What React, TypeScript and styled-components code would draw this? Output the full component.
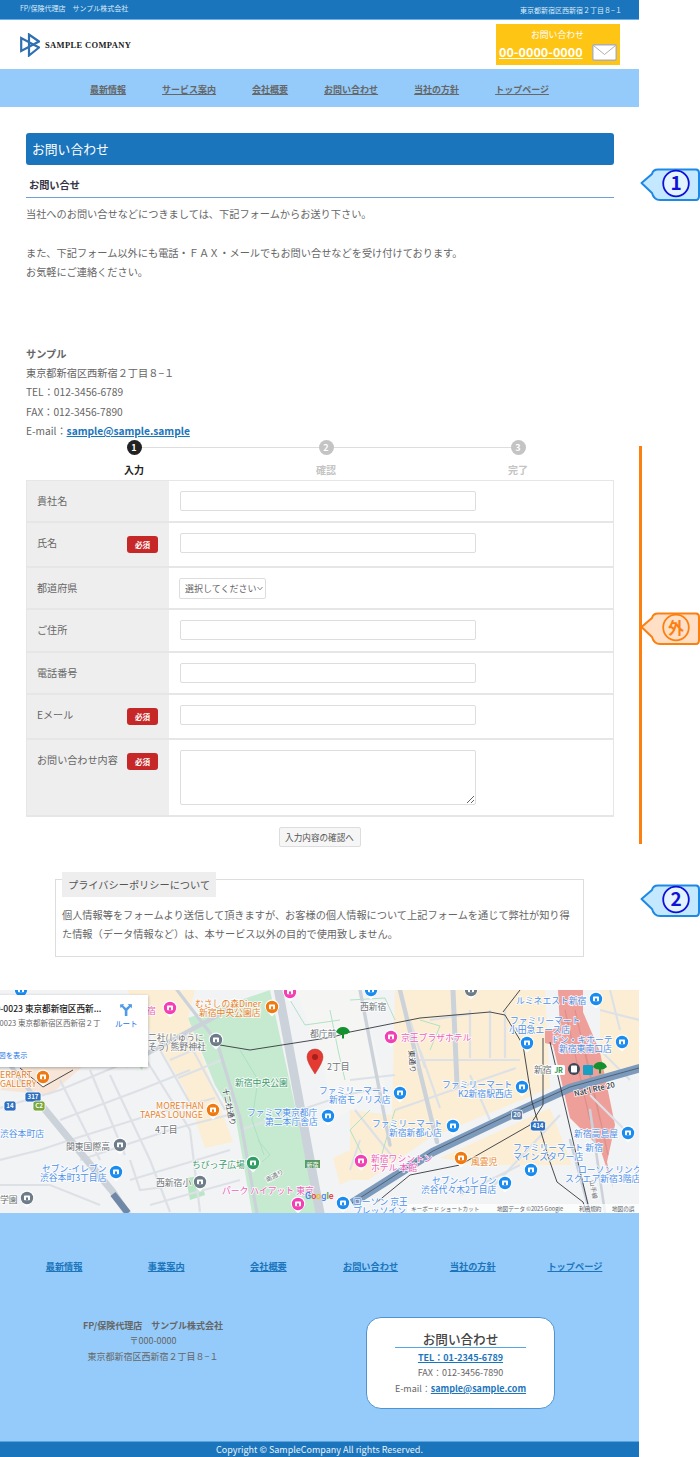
import React from 'react';
import styled, { createGlobalStyle } from 'styled-components';

const GlobalStyle = createGlobalStyle`
	html, body {
		margin: 0;
		padding: 0;
		background: #fff;
	}
	body {
		font-family: 'Noto Sans CJK JP', 'Noto Sans', sans-serif;
		color: #666;
		font-size: 10px;
	}
	* {
		box-sizing: border-box;
	}
`;

const BLUE = '#1b75bc';
const SKY = '#94cbfa';

const Shell = styled.div`
	position: relative;
	width: 700px;
	height: 1457px;
	overflow: hidden;
`;

const Page = styled.div`
	width: 639px;
`;

const TopBar = styled.div`
	height: 20px;
	background: ${BLUE};
	border-bottom: 1px solid #6db0e8;
	color: #dcecf9;
	font-size: 7px;
	display: flex;
	justify-content: space-between;
	padding: 0 17px 0 20px;
	line-height: 16px;
`;

const TopAddress = styled.span`
	padding-top: 2px;
`;

const Header = styled.header`
	height: 49px;
	display: flex;
	justify-content: space-between;
	align-items: center;
	padding: 0 19px 0 20px;
`;

const Brand = styled.div`
	display: flex;
	align-items: center;
	gap: 5px;
	font-family: 'Liberation Serif', serif;
	font-weight: 700;
	font-size: 8.5px;
	letter-spacing: 0.35px;
	color: #222;
`;

const CallBox = styled.div`
	width: 124px;
	height: 41px;
	background: #ffc515;
	color: #fff;
	padding: 4px 3px 0;
`;

const CallTitle = styled.div`
	font-size: 8.8px;
	line-height: 14px;
	padding-left: 32px;
`;

const CallRow = styled.div`
	display: flex;
	justify-content: space-between;
	align-items: center;
`;

const CallNumber = styled.a`
	font-size: 12.6px;
	line-height: 20px;
	font-weight: 700;
	text-decoration: underline;
`;

const Nav = styled.nav`
	height: 38px;
	background: ${SKY};
	display: flex;
	justify-content: center;
	align-items: center;
	gap: 36px;
	padding-top: 2px;
`;

const NavLink = styled.a`
	font-size: 9px;
	font-weight: 700;
	color: #666;
	text-decoration: underline;
`;

const Main = styled.main`
	padding: 26px 25px 33px 26px;
`;

const Title = styled.h1`
	margin: 0;
	height: 32px;
	background: ${BLUE};
	border-radius: 3px;
	color: #fff;
	font-size: 12.8px;
	font-weight: 400;
	line-height: 32px;
	padding-left: 6px;
`;

const SubTitle = styled.h2`
	margin: 0;
	height: 33px;
	padding: 13px 0 0 3px;
	font-size: 10.2px;
	line-height: 14px;
	font-weight: 700;
	color: #334;
	border-bottom: 1px solid #6f9fd4;
`;

const Text = styled.p<{ $gap?: number }>`
	margin: ${(p) => p.$gap ?? 0}px 0 0;
	font-size: 10.2px;
	line-height: 19.2px;
`;

const MailLink = styled.a`
	color: ${BLUE};
	font-weight: 700;
	text-decoration: underline;
`;

const Steps = styled.ol`
	list-style: none;
	margin: 0;
	padding: 0 0 2px 12px;
	height: 40px;
	display: grid;
	grid-template-columns: repeat(3, 192px);
`;

const Step = styled.li<{ $on?: boolean }>`
	position: relative;
	display: flex;
	flex-direction: column;
	align-items: center;
	gap: 8px;
	color: ${(p) => (p.$on ? '#222' : '#c4c4c4')};
	font-size: 10px;
	font-weight: 700;
	line-height: 14px;

	&:not(:first-child)::before {
		content: '';
		position: absolute;
		left: -50%;
		right: 50%;
		top: 7px;
		height: 1px;
		background: #ddd;
		z-index: 0;
	}
`;

const StepDot = styled.span<{ $on?: boolean }>`
	position: relative;
	z-index: 1;
	width: 15px;
	height: 15px;
	border-radius: 50%;
	background: ${(p) => (p.$on ? '#222' : '#c4c4c4')};
	color: #fff;
	font-size: 9px;
	line-height: 15px;
	text-align: center;
`;

const Form = styled.form`
	border: 1px solid #e6e6e6;
	border-bottom: 0;
`;

const Row = styled.div<{ $h: number }>`
	height: ${(p) => p.$h}px;
	display: grid;
	grid-template-columns: 142px 1fr;
	border-bottom: 2px solid #e6e6e6;
`;

const LabelCell = styled.div`
	background: #eee;
	padding: 13px 11px 0 10px;
	display: flex;
	justify-content: space-between;
	align-items: flex-start;
	line-height: 14px;
	font-size: 10.1px;
`;

const FieldCell = styled.div`
	padding: 10px 0 0 11px;
	display: flex;
	align-items: flex-start;
`;

const Badge = styled.span`
	width: 31px;
	height: 17px;
	background: #c62828;
	border-radius: 3px;
	color: #fff;
	font-size: 7.6px;
	font-weight: 700;
	line-height: 17px;
	text-align: center;
`;

const Input = styled.input`
	width: 296px;
	height: 20px;
	border: 1px solid #ddd;
	border-radius: 2px;
	background: #fff;
	outline: none;
`;

const SelectWrap = styled.div`
	position: relative;
	width: 87px;
	height: 21px;
	margin-left: -1px;

	svg {
		position: absolute;
		right: 3px;
		top: 8px;
	}
`;

const Select = styled.select`
	appearance: none;
	width: 100%;
	height: 100%;
	padding: 0 0 0 5px;
	border: 1px solid #ddd;
	border-radius: 2px;
	background: #fff;
	color: #666;
	font-family: inherit;
	font-size: 9px;
`;

const TextArea = styled.textarea`
	width: 296px;
	height: 55px;
	border: 1px solid #ddd;
	border-radius: 2px;
	outline: none;
`;

const Actions = styled.div`
	display: flex;
	justify-content: center;
	margin-top: 10px;
	padding-right: 1px;
`;

const Submit = styled.button`
	width: 82px;
	height: 20px;
	padding: 0;
	border: 1px solid #ddd;
	border-radius: 2px;
	background: #f6f6f6;
	color: #555;
	font-family: inherit;
	font-size: 8.6px;
`;

const Privacy = styled.section`
	width: 529px;
	height: 78px;
	margin: 32px 0 0 29px;
	padding: 0 6px;
	border: 1px solid #ddd;
`;

const PrivacyTitle = styled.h3`
	display: inline-block;
	margin: -8px 0 0;
	padding: 0 6px;
	height: 25px;
	background: #eee;
	color: #555;
	font-size: 10.2px;
	font-weight: 400;
	line-height: 26px;
	vertical-align: top;
`;

const PrivacyText = styled.p`
	margin: 8px 0 0;
	font-size: 10.2px;
	line-height: 19.2px;
`;

const MapFrame = styled.div`
	position: relative;
	height: 223px;
	overflow: hidden;
	background: #f2f3f5;
`;

const MapSvg = styled.svg`
	display: block;
	font-family: 'Noto Sans CJK JP', 'Noto Sans', sans-serif;
`;

const MapLabel = styled.text<{ $c: string; $s?: number }>`
	fill: ${(p) => p.$c};
	font-size: ${(p) => p.$s ?? 8.8}px;
	dominant-baseline: central;
	paint-order: stroke;
	stroke: rgba(255, 255, 255, 0.85);
	stroke-width: 1.6px;
`;

const PlaceCard = styled.div`
	position: absolute;
	left: -33px;
	top: 5px;
	width: 181px;
	height: 72px;
	background: #fff;
	box-shadow: 0 1px 3px rgba(0, 0, 0, 0.3);
	padding: 7px 0 0 10px;
	display: grid;
	grid-template-columns: 1fr 50px;
`;

const PlaceName = styled.div`
	font-size: 8.6px;
	line-height: 12px;
	font-weight: 500;
	color: #222;
	white-space: nowrap;
`;

const PlaceAddress = styled.div`
	font-size: 7.5px;
	line-height: 14px;
	margin-top: 2px;
	color: #666;
	white-space: nowrap;
`;

const PlaceLink = styled.a`
	display: block;
	margin-top: 19px;
	font-size: 7.2px;
	line-height: 12px;
	color: #1a73e8;
	white-space: nowrap;
`;

const RouteBox = styled.div`
	display: flex;
	flex-direction: column;
	align-items: center;
	gap: 1px;
	color: #1a73e8;
	font-size: 7.6px;
	line-height: 12px;
	padding: 1px 0 0 0;
`;

const Footer = styled.footer`
	height: 228px;
	background: ${SKY};
	padding: 46px 13px 0;
`;

const FooterNav = styled.div`
	display: grid;
	grid-template-columns: repeat(6, 1fr);
	height: 14px;
	line-height: 14px;
	text-align: center;
`;

const FooterLink = styled.a`
	font-size: 9.2px;
	font-weight: 700;
	color: ${BLUE};
	text-decoration: underline;
`;

const ContactLink = styled(FooterLink)`
	font-size: 9px;
`;

const FooterBody = styled.div`
	display: flex;
	margin-top: 44px;
	margin-left: -13px;
`;

const Company = styled.div`
	width: 306px;
	padding-top: 1px;
	text-align: center;
	font-size: 9px;
	line-height: 15.4px;
`;

const ContactCard = styled.div`
	width: 189px;
	height: 92px;
	margin-left: 60px;
	padding-top: 13px;
	background: #fff;
	border: 1px solid #4f94cf;
	border-radius: 15px;
	text-align: center;
	font-size: 9px;
	line-height: 15.4px;
`;

const ContactTitle = styled.div`
	width: 131px;
	height: 17px;
	margin: 0 auto 2px;
	border-bottom: 1px solid #55a6e6;
	font-size: 12.6px;
	font-weight: 500;
	line-height: 16px;
	color: #444;
`;

const Copyright = styled.div`
	height: 16px;
	background: ${BLUE};
	border-top: 1px solid #5aa4de;
	color: #e8f2fa;
	font-size: 9px;
	line-height: 16px;
	text-align: center;
`;

const Marker = styled.svg<{ $top: number }>`
	position: absolute;
	left: 639px;
	top: ${(p) => p.$top}px;
	display: block;
	font-family: 'Noto Sans CJK JP', 'Liberation Sans', sans-serif;
`;

const OuterRule = styled.div`
	position: absolute;
	left: 639px;
	top: 446px;
	width: 3px;
	height: 398px;
	background: #fb8010;
`;

const Callout: React.FC<{ top: number; label: string; tone: 'blue' | 'orange' }> = ({ top, label, tone }) => {
	const fill = tone === 'blue' ? '#c3e8ff' : '#ffdfc6';
	const line = tone === 'blue' ? '#1e88e5' : '#fb8010';
	const ring = tone === 'blue' ? '#1010d8' : '#fb8010';
	return (
		<Marker $top={top} width="61" height="34" viewBox="0 0 61 34">
			<path
				d="M2.5 15 L13 6 Q14 1.5 19 1.5 H57 Q60 1.5 60 5 V28 Q60 32 57 32 H21 Q15 32 13 25 Z"
				fill={fill}
				stroke={line}
				strokeWidth="2"
				strokeLinejoin="round"
			/>
			<circle cx="37" cy="15.5" r="12.8" fill={tone === 'blue' ? '#e3f4ff' : fill} stroke={ring} strokeWidth="1.8" />
			<text x="37" y="22" textAnchor="middle" fontSize={tone === 'blue' ? 19 : 16} fontWeight="700" fill={ring}>
				{label}
			</text>
		</Marker>
	);
};

const Logo = () => (
	<svg width="20" height="24" viewBox="0 0 20 24" fill="none" stroke="#2f6eb0" strokeWidth="2.2" strokeLinejoin="miter">
		<path d="M1.2 5 L1.2 18 L19 8.5 L9 1.5 V22.5 L19 14.5 L1.2 5 Z" />
	</svg>
);

const Envelope = () => (
	<svg width="25" height="17" viewBox="0 0 25 17">
		<rect x="0.8" y="0.8" width="23.4" height="15.4" rx="1.5" fill="#fff" stroke="#aeaeae" strokeWidth="1.4" />
		<path d="M1.5 1.5 L12.5 10.5 L23.5 1.5" fill="none" stroke="#aeaeae" strokeWidth="1" />
	</svg>
);

const Chevron = () => (
	<svg width="6" height="5" viewBox="0 0 6 5" fill="none" stroke="#666" strokeWidth="0.8">
		<path d="M0.5 1 L3 3.8 L5.5 1" />
	</svg>
);

const RouteIcon = () => (
	<svg width="14" height="14" viewBox="0 0 14 14">
		<path d="M1 1.5 L5 1 L4.2 2.4 L7 5 L10 2.4 L8.8 1 L13 1.2 L12.8 5.4 L11.6 4 L8.4 7.4 V13 H5.8 V7.6 L2.8 4 L1.4 5 Z" fill="#4f9be8" />
	</svg>
);

type Tint = 'blue' | 'pink' | 'orange' | 'grey' | 'green';

const tint: Record<Tint, string> = {
	blue: '#1a8cf0',
	pink: '#f43fb4',
	orange: '#f07a12',
	grey: '#6d7c88',
	green: '#2f9e62',
};

const labelTint: Record<Tint, string> = {
	blue: '#4d90ea',
	pink: '#ee5fbb',
	orange: '#e8832a',
	grey: '#6f7478',
	green: '#3d9a6c',
};

const labels: [string, number, number, Tint][] = [
	['むさしの森Diner', 195, 13, 'orange'],
	['新宿中央公園店', 199, 22, 'orange'],
	['宿', 147, 20, 'pink'],
	['二社(じゅうに', 148, 47, 'grey'],
	['そう) 熊野神社', 148, 56, 'grey'],
	['都庁前', 310, 43, 'grey'],
	['新宿中央公園', 235, 92, 'green'],
	['2丁目', 327, 76, 'grey'],
	['MORETHAN', 156, 115, 'orange'],
	['TAPAS LOUNGE', 140, 124, 'orange'],
	['ERPART', 0, 84, 'orange'],
	['GALLERY', 0, 93, 'orange'],
	['ファミマ東京都庁', 247, 122, 'blue'],
	['第二本庁舎店', 265, 131, 'blue'],
	['ファミリーマート', 319, 100, 'blue'],
	['新宿モノリス店', 329, 109, 'blue'],
	['4丁目', 155, 139, 'grey'],
	['関東国際高', 66, 156, 'grey'],
	['渋谷本町店', 0, 143, 'blue'],
	['セブン-イレブン', 42, 178, 'blue'],
	['渋谷本町3丁目店', 40, 187, 'blue'],
	['西新宿小', 156, 192, 'grey'],
	['ちびっ子広場', 192, 174, 'green'],
	['学園', 0, 209, 'grey'],
	['パーク ハイアット 東京', 222, 200, 'pink'],
	['西新宿', 360, 16, 'grey'],
	['京王プラザホテル', 401, 47, 'pink'],
	['ルミネエスト新宿', 516, 10, 'blue'],
	['ファミリーマート', 510, 30, 'blue'],
	['小田急エース店', 509, 39, 'blue'],
	['ドン・キホーテ', 551, 49, 'blue'],
	['新宿東南口店', 559, 58, 'blue'],
	['新宿', 534, 79, 'grey'],
	['ファミリーマート', 442, 94, 'blue'],
	['K2新宿駅西店', 458, 103, 'blue'],
	['ファミリーマート', 372, 133, 'blue'],
	['新宿新都心店', 389, 142, 'blue'],
	['新宿高島屋', 574, 143, 'blue'],
	['ファミリーマート 新宿', 513, 157, 'blue'],
	['マインズタワー店', 513, 166, 'blue'],
	['ローソン リンク', 578, 179, 'blue'],
	['スクエア新宿3階店', 565, 188, 'blue'],
	['新宿ワシントン', 371, 168, 'pink'],
	['ホテル 本館', 371, 177, 'pink'],
	['風雲児', 471, 171, 'orange'],
	['セブン-イレブン', 432, 190, 'blue'],
	['渋谷代々木2丁目店', 421, 199, 'blue'],
	['ローソン 京王', 353, 211, 'blue'],
	['プレッソイン', 353, 220, 'blue'],
];

const pins: [number, number, Tint][] = [
	[272, 17, 'orange'],
	[170, 18, 'pink'],
	[290, 2, 'pink'],
	[216, 50, 'grey'],
	[213, 120, 'orange'],
	[43, 87, 'orange'],
	[328, 126, 'blue'],
	[120, 155, 'grey'],
	[116, 182, 'blue'],
	[200, 192, 'grey'],
	[253, 173, 'green'],
	[27, 208, 'grey'],
	[298, 214, 'pink'],
	[343, 213, 'blue'],
	[391, 47, 'pink'],
	[596, 9, 'blue'],
	[527, 53, 'blue'],
	[622, 52, 'blue'],
	[522, 97, 'blue'],
	[400, 103, 'blue'],
	[453, 136, 'blue'],
	[628, 143, 'blue'],
	[531, 180, 'blue'],
	[361, 171, 'pink'],
	[461, 168, 'orange'],
	[505, 193, 'blue'],
	[371, 0, 'blue'],
	[471, 0, 'grey'],
	[21, 0, 'blue'],
];

const minorRoads = [
	'M0 118 L60 100 L127 72',
	'M60 130 L140 100 L190 80',
	'M70 150 L150 125 L215 108',
	'M80 170 L170 140 L232 124',
	'M130 190 L230 160',
	'M150 215 L240 190',
	'M140 60 L190 140 L200 222',
	'M110 85 L150 170 L170 222',
	'M60 90 L100 170',
	'M90 80 L125 165',
	'M0 170 L40 160 L70 150',
	'M0 195 L50 195 L100 215',
	'M130 170 L140 200 L180 195',
	'M160 60 L195 122',
	'M185 45 L225 120',
	'M170 70 L205 55',
	'M178 88 L222 70',
	'M240 140 L345 105 L380 98',
	'M415 70 H520',
	'M470 20 V68',
	'M490 20 V68',
	'M505 20 V68',
	'M395 120 L516 78',
	'M430 30 L470 24',
	'M410 30 L425 78',
	'M395 170 L355 120',
	'M420 60 L440 118',
	'M470 85 L490 130',
	'M600 20 L639 30',
	'M600 60 L630 90',
	'M610 0 L620 40',
	'M560 125 L490 200',
	'M460 205 L520 175',
	'M590 105 L625 140',
	'M350 90 L395 85',
	'M360 150 L350 180',
];

const parkWalks = [
	'M240 60 L258 90 L252 130 L264 165',
	'M258 150 L270 165 L262 172',
	'M290 10 L305 35 L340 30',
	'M330 20 L338 60 L345 90',
	'M350 10 L385 8 L395 30',
	'M370 120 L350 140 L365 170',
	'M395 120 L383 160 L380 175',
	'M420 30 L440 36 L430 60',
];

const railLines = [
	'M220 55 L250 60 L333 47 L350 42 L420 28 L490 22 L505 25 L523 55 L532 112 L550 172 L557 192 L583 212 L587 223',
	'M20 78 L43 97 L73 80',
	'M377 212 L410 185 L460 175 L530 135 L543 115 L543 48',
	'M550 52 L577 168 L590 223',
	'M503 22 L520 0',
];

const MapPin: React.FC<{ x: number; y: number; t: Tint }> = ({ x, y, t }) => (
	<g transform={`translate(${x} ${y})`}>
		<path d="M-7.4 0 A7.4 7.4 0 1 1 7.4 0 Q6 4 0 9.5 Q-6 4 -7.4 0 Z" fill="#fff" />
		<circle r="6.2" fill={tint[t]} />
		<rect x="-3" y="-2.6" width="6" height="4.8" rx="0.7" fill="#fff" />
		<rect x="-1" y="-0.6" width="2" height="2.8" fill={tint[t]} />
	</g>
);

const Ginkgo: React.FC<{ x: number; y: number }> = ({ x, y }) => (
	<path
		transform={`translate(${x} ${y})`}
		d="M-7 -1 Q-5 -6 0 -6 Q5 -6 7 -1 Q4 1.5 1 1.5 L1 5.5 H-1 L-1 1.5 Q-4 1.5 -7 -1 Z"
		fill="#14912f"
	/>
);

const Shield: React.FC<{ x: number; y: number; w: number; text: string; c?: string }> = ({ x, y, w, text, c = '#2f78c4' }) => (
	<g>
		<rect x={x - w / 2} y={y - 5} width={w} height="10" rx="2.5" fill={c} stroke="#fff" strokeWidth="0.8" />
		<text x={x} y={y + 2.3} textAnchor="middle" fontSize="6.2" fontWeight="700" fill="#fff">
			{text}
		</text>
	</g>
);

const CityMap = () => (
	<MapSvg width="639" height="223" viewBox="0 0 639 223">
		<rect width="639" height="223" fill="#f2f3f5" />
		<path d="M188 28 L270 0 L318 223 L252 223 L236 130 L215 95 Z" fill="#c6ead0" />
		<path d="M127 0 L195 0 L188 28 L233 152 L205 158 L185 100 L150 40 Z" fill="#fbeed5" />
		<path d="M395 0 L545 0 L550 98 L430 148 L368 190 L350 190 L350 120 L392 125 Z" fill="#fbeed5" />
		<path d="M295 0 H360 L385 95 L335 130 L320 60 Z" fill="#f5f6f4" />
		<path d="M440 168 L550 118 L572 175 L480 175 Z" fill="#fbeed5" />
		<path d="M600 0 H639 V75 L600 88 Z" fill="#fbeed5" />
		<path d="M333 168 L350 160 V190 L340 195 Z" fill="#fbeed5" />
		<path d="M0 100 L30 70 L90 70 L50 105 Z" fill="#f7e5d8" />
		<path d="M558 0 L583 0 L583 22 L600 62 L615 135 L607 172 L613 198 L600 158 L570 128 L563 98 L553 55 L545 53 L545 40 L560 38 Z" fill="#ef9f9a" />
		<path d="M565 20 L590 130 M575 20 L600 130 M585 60 L608 165" stroke="#dd8f8a" strokeWidth="1.2" fill="none" />
		<path d="M186 188 L200 186 L205 205 L190 210 Z" fill="#b9e6c4" />
		<path d="M135 72 L145 70 L142 80 Z" fill="#b9e6c4" />
		<g fill="none" stroke="#dde1e6" strokeWidth="2.2">
			{minorRoads.map((d) => (
				<path key={d} d={d} />
			))}
		</g>
		<g fill="none" stroke="#a9dfc1" strokeWidth="0.9">
			{parkWalks.map((d) => (
				<path key={d} d={d} />
			))}
		</g>
		<g fill="none" stroke="#cbd2da" strokeLinecap="round">
			<path d="M278 -2 L320 223" strokeWidth="9" />
			<path d="M177 0 L217 52 L240 128 L257 223" strokeWidth="3.2" />
			<path d="M127 75 L150 62 L213 28 L235 15" strokeWidth="4.4" />
			<path d="M360 0 L390 155" strokeWidth="3.4" />
			<path d="M400 0 L437 152" strokeWidth="4.4" />
			<path d="M453 0 L457 95" strokeWidth="5" />
			<path d="M33 105 L113 202 L127 223" strokeWidth="7" />
			<path d="M0 62 L33 105" strokeWidth="4.4" />
			<path d="M590 120 L605 223" strokeWidth="2.6" />
			<path d="M570 150 L590 223" strokeWidth="2.6" />
		</g>
		<path d="M113 204 L128 223" stroke="#6f88a8" strokeWidth="6.5" fill="none" />
		<path d="M352 213 L433 162 L517 122 L570 98 L640 78" stroke="#7c9abb" strokeWidth="8.5" fill="none" />
		<path d="M352 213 L433 161 L517 121 L570 97 L639 78" stroke="#3c4a5a" strokeWidth="0.7" fill="none" />
		<g fill="none" stroke="#33383d" strokeWidth="0.9">
			{railLines.map((d) => (
				<path key={d} d={d} />
			))}
		</g>
		<Shield x={33} y={107} w={16} text="317" c="#2d6fc0" />
		<Shield x={10} y={116} w={12} text="14" c="#2d6fc0" />
		<Shield x={39} y={116} w={12} text="C2" c="#7aa83d" />
		<Shield x={517} y={125} w={11} text="20" c="#5f82ad" />
		<Shield x={538} y={136} w={15} text="414" c="#2d6fc0" />
		{labels.map(([text, x, y, t]) => (
			<MapLabel key={`${text}${x}`} x={x} y={y} $c={labelTint[t]}>
				{text}
			</MapLabel>
		))}
		{pins.map(([x, y, t]) => (
			<MapPin key={`${x}-${y}`} x={x} y={y} t={t} />
		))}
		<MapLabel x={226} y={98} $c="#3a4047" $s={7.6} transform="rotate(78 226 98)">
			十二社通り
		</MapLabel>
		<MapLabel x={266} y={190} $c="#6f7478" $s={6.4} transform="rotate(-28 266 190)">
			南通り
		</MapLabel>
		<MapLabel x={412} y={60} $c="#3a4047" $s={7.6} transform="rotate(85 412 60)">
			東通り
		</MapLabel>
		<MapLabel x={574} y={103} $c="#2a3440" $s={7.6} fontWeight="500" transform="rotate(-13 574 103)">
			Nat'l Rte 20
		</MapLabel>
		<MapLabel x={592} y={190} $c="#6f7478" $s={6.4} transform="rotate(80 592 190)">
			山手線
		</MapLabel>
		<rect x="305" y="170" width="15" height="8" fill="#5c9a68" />
		<text x="312.5" y="176.6" textAnchor="middle" fontSize="6" fill="#fff">
			新宿
		</text>
		<Ginkgo x={343} y={43} />
		<rect x="552" y="75" width="13" height="10" rx="1.5" fill="#fff" />
		<text x="558.5" y="83" textAnchor="middle" fontSize="7" fontWeight="700" fill="#1a9a50">
			JR
		</text>
		<circle cx="574" cy="79" r="6" fill="#3b4858" />
		<rect x="571" y="75.5" width="6" height="7" rx="1" fill="#fff" />
		<rect x="583" y="75" width="10" height="10" rx="1" fill="#17a0c4" />
		<Ginkgo x={600} y={78} />
		<path
			d="M315 84 Q307 72 307 67 A8 8 0 1 1 323 67 Q323 72 315 84 Z"
			fill="#e53a32"
			stroke="#b5322b"
			strokeWidth="0.5"
		/>
		<circle cx="315" cy="67" r="3" fill="#a5201b" />
		<text x="305" y="209" fontSize="9" fontWeight="500" fontFamily="'Roboto', sans-serif">
			<tspan fill="#4285f4">G</tspan>
			<tspan fill="#ea4335">o</tspan>
			<tspan fill="#fbbc05">o</tspan>
			<tspan fill="#4285f4">g</tspan>
			<tspan fill="#34a853">l</tspan>
			<tspan fill="#ea4335">e</tspan>
		</text>
		<rect x="407" y="214" width="232" height="9" fill="#fff" fillOpacity="0.7" />
		<g fontSize="5.6" fill="#5f6368">
			<text x="411" y="220.5">キーボード ショートカット</text>
			<text x="497" y="220.5">地図データ ©2025 Google</text>
			<text x="579" y="220.5">利用規約</text>
			<text x="612" y="220.5">地図の誤</text>
		</g>
	</MapSvg>
);

const navItems = ['最新情報', 'サービス案内', '会社概要', 'お問い合わせ', '当社の方針', 'トップページ'];
const footerItems = ['最新情報', '事業案内', '会社概要', 'お問い合わせ', '当社の方針', 'トップページ'];

const fields: { label: string; h: number; required?: boolean; kind?: 'select' | 'area' }[] = [
	{ label: '貴社名', h: 42 },
	{ label: '氏名', h: 45, required: true },
	{ label: '都道府県', h: 42, kind: 'select' },
	{ label: 'ご住所', h: 43 },
	{ label: '電話番号', h: 42 },
	{ label: 'Eメール', h: 45, required: true },
	{ label: 'お問い合わせ内容', h: 77, required: true, kind: 'area' },
];

export default function App() {
	return (
		<Shell>
			<GlobalStyle />
			<Page>
				<TopBar>
					<span>FP/保険代理店　サンプル株式会社</span>
					<TopAddress>東京都新宿区西新宿２丁目８−１</TopAddress>
				</TopBar>
				<Header>
					<Brand>
						<Logo />
						SAMPLE COMPANY
					</Brand>
					<CallBox>
						<CallTitle>お問い合わせ</CallTitle>
						<CallRow>
							<CallNumber>00-0000-0000</CallNumber>
							<Envelope />
						</CallRow>
					</CallBox>
				</Header>
				<Nav>
					{navItems.map((item) => (
						<NavLink key={item}>{item}</NavLink>
					))}
				</Nav>
				<Main>
					<Title>お問い合わせ</Title>
					<SubTitle>お問い合せ</SubTitle>
					<Text $gap={6.4}>当社へのお問い合せなどにつきましては、下記フォームからお送り下さい。</Text>
					<Text $gap={19.2}>また、下記フォーム以外にも電話・ＦＡＸ・メールでもお問い合せなどを受け付けております。</Text>
					<Text>お気軽にご連絡ください。</Text>
					<Text $gap={62.8}>
						<b>サンプル</b>
						<br />
						東京都新宿区西新宿２丁目８−１
						<br />
						TEL：012-3456-6789
						<br />
						FAX：012-3456-7890
						<br />
						E-mail：<MailLink>sample@sample.sample</MailLink>
					</Text>
					<Steps>
						<Step $on>
							<StepDot $on>1</StepDot>
							入力
						</Step>
						<Step>
							<StepDot>2</StepDot>
							確認
						</Step>
						<Step>
							<StepDot>3</StepDot>
							完了
						</Step>
					</Steps>
					<Form>
						{fields.map((f) => (
							<Row key={f.label} $h={f.h}>
								<LabelCell>
									{f.label}
									{f.required && <Badge>必須</Badge>}
								</LabelCell>
								<FieldCell>
									{f.kind === 'select' ? (
										<SelectWrap>
											<Select>
												<option>選択してください</option>
											</Select>
											<Chevron />
										</SelectWrap>
									) : f.kind === 'area' ? (
										<TextArea />
									) : (
										<Input />
									)}
								</FieldCell>
							</Row>
						))}
					</Form>
					<Actions>
						<Submit type="button">入力内容の確認へ</Submit>
					</Actions>
					<Privacy>
						<PrivacyTitle>プライバシーポリシーについて</PrivacyTitle>
						<PrivacyText>
							個人情報等をフォームより送信して頂きますが、お客様の個人情報について上記フォームを通じて弊社が知り得た情報（データ情報など）は、本サービス以外の目的で使用致しません。
						</PrivacyText>
					</Privacy>
				</Main>
				<MapFrame>
					<CityMap />
					<PlaceCard>
						<div>
							<PlaceName>〒160-0023 東京都新宿区西新...</PlaceName>
							<PlaceAddress>〒160-0023 東京都新宿区西新宿２丁</PlaceAddress>
							<PlaceLink>拡大地図を表示</PlaceLink>
						</div>
						<RouteBox>
							<RouteIcon />
							ルート
						</RouteBox>
					</PlaceCard>
				</MapFrame>
				<Footer>
					<FooterNav>
						{footerItems.map((item) => (
							<div key={item}>
								<FooterLink>{item}</FooterLink>
							</div>
						))}
					</FooterNav>
					<FooterBody>
						<Company>
							<b>FP/保険代理店　サンプル株式会社</b>
							<br />
							〒000-0000
							<br />
							東京都新宿区西新宿２丁目８−１
						</Company>
						<ContactCard>
							<ContactTitle>お問い合わせ</ContactTitle>
							<ContactLink>TEL：01-2345-6789</ContactLink>
							<br />
							FAX：012-3456-7890
							<br />
							E-mail：<ContactLink>sample@sample.com</ContactLink>
						</ContactCard>
					</FooterBody>
				</Footer>
				<Copyright>Copyright © SampleCompany All rights Reserved.</Copyright>
			</Page>
			<Callout top={168} label="1" tone="blue" />
			<OuterRule />
			<Callout top={612} label="外" tone="orange" />
			<Callout top={884} label="2" tone="blue" />
		</Shell>
	);
}
